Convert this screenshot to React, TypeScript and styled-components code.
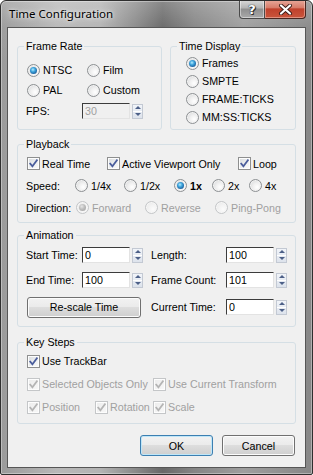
import React from "react";
import styled, { createGlobalStyle } from "styled-components";

const GlobalStyle = createGlobalStyle`
  html, body { margin: 0; padding: 0; background: #ffffff; }
  body { font-family: "Liberation Sans", Arial, sans-serif; }
  * { box-sizing: border-box; }
`;

const Window = styled.div`
  width: 313px;
  height: 475px;
  display: flex;
  flex-direction: column;
  border: 1px solid #2f2f2f;
  border-radius: 6px 6px 2px 2px;
  overflow: hidden;
  background:
    linear-gradient(180deg, rgba(255,255,255,0.22) 0px, rgba(255,255,255,0.04) 26px, rgba(0,0,0,0) 60px),
    linear-gradient(90deg, #9a9a9a 0%, #b8b8b8 18%, #b3b3b3 32%, #878787 44%, #686868 52%, #858585 62%, #9e9e9e 78%, #878787 100%);
  box-shadow: inset 0 0 0 1px rgba(255,255,255,0.35);
`;

const TitleBar = styled.div`
  height: 26px;
  flex: none;
  display: flex;
  align-items: flex-start;
`;

const TitleText = styled.div`
  flex: 1;
  padding-left: 8px;
  line-height: 26px;
  font-family: "Noto Sans", "Open Sans", sans-serif;
  font-size: 11.5px;
  color: #000;
  text-shadow: 0 0 6px rgba(255,255,255,0.9), 0 0 3px rgba(255,255,255,0.7);
`;

const CaptionButtons = styled.div`
  display: flex;
  margin: -1px 6px 0 0;
`;

const HelpButton = styled.div`
  width: 26px;
  height: 19px;
  display: flex;
  align-items: center;
  justify-content: center;
  border: 1px solid #4a4a4a;
  border-top: none;
  border-radius: 0 0 0 4px;
  background: linear-gradient(180deg, #dadada 0%, #b3b3b3 45%, #8f8f8f 50%, #a9a9a9 100%);
  box-shadow: inset 0 0 0 1px rgba(255,255,255,0.45);
  color: #fff;
  font-family: "DejaVu Sans", sans-serif;
  font-weight: bold;
  font-size: 13px;
  text-shadow: 0 0 1px #222, 0 0 1px #222, 1px 1px 0 #333;
`;

const CloseButton = styled.div`
  width: 41px;
  height: 19px;
  display: flex;
  align-items: center;
  justify-content: center;
  border: 1px solid #4a2620;
  border-top: none;
  border-left: none;
  border-radius: 0 0 4px 0;
  background: linear-gradient(180deg, #e8a99b 0%, #d77d6b 42%, #c0412c 50%, #c9553c 100%);
  box-shadow: inset 0 0 0 1px rgba(255,220,210,0.45);
`;

const Client = styled.div`
  flex: 1;
  margin: 0 6px 6px 6px;
  border: 1px solid #565656;
  background: #f0f0f0;
  padding: 18px 9px 0 9px;
  display: flex;
  flex-direction: column;
  font-size: 10.7px;
  color: #000;
`;

const TopRow = styled.div`
  display: flex;
  gap: 8px;
  align-items: stretch;
`;

const Group = styled.div<{ $mt?: number; $pb?: number; $w?: number; $grow?: boolean }>`
  display: flex;
  flex-direction: column;
  border: 1px solid #d5dfe5;
  border-radius: 3px;
  padding: 0 0 ${(p) => p.$pb ?? 0}px 8px;
  margin-top: ${(p) => p.$mt ?? 0}px;
  flex: ${(p) => (p.$grow ? "1 1 0" : "none")};
  ${(p) => (p.$w ? `width: ${p.$w}px;` : "")}
`;

const GroupTitle = styled.div`
  align-self: flex-start;
  margin: -7px 0 0 -2px;
  padding: 0 2px;
  line-height: 13px;
  background: #f0f0f0;
`;

const RadioGrid = styled.div<{ $cols: string; $rowH: number; $mt: number; $ml: number }>`
  display: grid;
  grid-template-columns: ${(p) => p.$cols};
  grid-auto-rows: ${(p) => p.$rowH}px;
  margin: ${(p) => p.$mt}px 0 0 ${(p) => p.$ml}px;
`;

const Row = styled.div<{ $h: number; $mt?: number }>`
  display: flex;
  align-items: center;
  height: ${(p) => p.$h}px;
  margin-top: ${(p) => p.$mt ?? 0}px;
`;

const Cell = styled.div<{ $w?: number }>`
  display: flex;
  align-items: center;
  ${(p) => (p.$w ? `width: ${p.$w}px; flex: none;` : "")}
`;

const Label = styled.span<{ $w: number }>`
  width: ${(p) => p.$w}px;
  flex: none;
  white-space: nowrap;
`;

const Item = styled.label<{ $w?: number; $ml?: number; $disabled?: boolean; $bold?: boolean; $gap: number }>`
  display: flex;
  align-items: center;
  gap: ${(p) => p.$gap}px;
  white-space: nowrap;
  ${(p) => (p.$w ? `width: ${p.$w}px; flex: none;` : "")}
  margin-left: ${(p) => p.$ml ?? 0}px;
  color: ${(p) => (p.$disabled ? "#a0a0a0" : "#000")};
  font-weight: ${(p) => (p.$bold ? "bold" : "normal")};
`;

const RadioCircle = styled.span<{ $checked?: boolean; $disabled?: boolean }>`
  width: 13px;
  height: 13px;
  flex: none;
  border-radius: 50%;
  display: flex;
  align-items: center;
  justify-content: center;
  border: 1px solid ${(p) => (p.$disabled ? "#c4c6c8" : "#8d9093")};
  background: ${(p) =>
    p.$disabled
      ? "radial-gradient(circle at 65% 65%, #fbfbfb 0%, #f2f2f2 45%, #e4e4e4 100%)"
      : "radial-gradient(circle at 65% 65%, #ffffff 0%, #f0f0f0 40%, #cfd1d3 100%)"};
  box-shadow: inset 0 0 0 1px ${(p) => (p.$disabled ? "#f6f6f6" : "#f2f2f2")};
  &::after {
    content: "";
    display: ${(p) => (p.$checked ? "block" : "none")};
    width: 7px;
    height: 7px;
    border-radius: 50%;
    background: ${(p) =>
      p.$disabled
        ? "radial-gradient(circle at 40% 35%, #e6e6e6 0%, #bdbdbd 45%, #9d9d9d 100%)"
        : "radial-gradient(circle at 42% 38%, #b8ecff 0%, #3fa6dd 35%, #1b5f9d 75%, #123f6b 100%)"};
  }
`;

const CheckBox = styled.span<{ $disabled?: boolean }>`
  width: 13px;
  height: 13px;
  flex: none;
  display: flex;
  align-items: center;
  justify-content: center;
  border: 1px solid ${(p) => (p.$disabled ? "#c4c6c8" : "#8e8f8f")};
  background: ${(p) =>
    p.$disabled
      ? "linear-gradient(135deg, #ececec 0%, #f8f8f8 100%)"
      : "linear-gradient(135deg, #d7dadd 0%, #eef0f1 55%, #fbfbfb 100%)"};
  box-shadow: inset 0 0 0 1px #fdfdfd;
`;

const TextField = styled.input<{ $disabled?: boolean }>`
  width: 48px;
  height: 16px;
  flex: none;
  margin: 0;
  padding: 0 2px;
  border: 1px solid;
  border-color: #3c3c3c #e3e3e3 #e3e3e3 #3c3c3c;
  background: ${(p) => (p.$disabled ? "#f0f0f0" : "#ffffff")};
  color: ${(p) => (p.$disabled ? "#a0a0a0" : "#000")};
  font-family: "Liberation Sans", Arial, sans-serif;
  font-size: 10.7px;
  line-height: 14px;
  outline: none;
`;

const Spinner = styled.span`
  width: 11px;
  height: 15px;
  flex: none;
  margin-left: 2px;
  display: flex;
  flex-direction: column;
  border: 1px solid #c3c9d3;
  background: linear-gradient(180deg, #f1f4f9 0%, #dde3ec 100%);
`;

const SpinHalf = styled.span<{ $down?: boolean }>`
  flex: 1;
  display: flex;
  align-items: center;
  justify-content: center;
  ${(p) => (p.$down ? "border-top: 1px solid #ffffff;" : "")}
  &::after {
    content: "";
    border-left: 3px solid transparent;
    border-right: 3px solid transparent;
    ${(p) => (p.$down ? "border-top: 3px solid #4d6088;" : "border-bottom: 3px solid #4d6088;")}
  }
`;

const PushButton = styled.button<{ $w: number; $default?: boolean; $ml?: number }>`
  width: ${(p) => p.$w}px;
  height: 21px;
  flex: none;
  margin: 0 0 0 ${(p) => p.$ml ?? 0}px;
  padding: 0;
  font-family: "Liberation Sans", Arial, sans-serif;
  font-size: 10.7px;
  color: #000;
  border: 1px solid ${(p) => (p.$default ? "#3c7fb1" : "#707070")};
  border-radius: 3px;
  background: linear-gradient(180deg, #f2f2f2 0%, #ebebeb 45%, #dddddd 50%, #cfcfcf 100%);
  box-shadow: inset 0 0 0 1px ${(p) => (p.$default ? "#bfe6f8" : "#fcfcfc")};
`;

const ButtonRow = styled.div`
  display: flex;
  justify-content: flex-end;
  gap: 9px;
  margin-top: 11px;
  padding-right: 1px;
`;

type RadioProps = {
  text: string;
  checked?: boolean;
  disabled?: boolean;
  bold?: boolean;
  w?: number;
  ml?: number;
};

const Radio = ({ text, checked, disabled, bold, w, ml }: RadioProps) => (
  <Item $gap={3} $w={w} $ml={ml} $disabled={disabled} $bold={bold}>
    <RadioCircle $checked={checked} $disabled={disabled} />
    <span>{text}</span>
  </Item>
);

type CheckProps = {
  text: string;
  checked?: boolean;
  disabled?: boolean;
  w?: number;
  ml?: number;
};

const Check = ({ text, checked, disabled, w, ml }: CheckProps) => (
  <Item $gap={2} $w={w} $ml={ml} $disabled={disabled}>
    <CheckBox $disabled={disabled}>
      {checked && (
        <svg width="9" height="9" viewBox="0 0 9 9">
          <path
            d="M1.2 4.6 L3.4 7.3 L7.9 1.2"
            fill="none"
            stroke={disabled ? "#b4b4b4" : "#4a5d9c"}
            strokeWidth="1.7"
            strokeLinecap="square"
          />
        </svg>
      )}
    </CheckBox>
    <span>{text}</span>
  </Item>
);

const Spin = () => (
  <Spinner>
    <SpinHalf />
    <SpinHalf $down />
  </Spinner>
);

type NumProps = { label: string; value: string; lw: number; disabled?: boolean };

const NumberField = ({ label, value, lw, disabled }: NumProps) => (
  <>
    <Label $w={lw}>{label}</Label>
    <TextField readOnly value={value} $disabled={disabled} disabled={disabled} />
    <Spin />
  </>
);

export default function App() {
  return (
    <>
      <GlobalStyle />
      <Window>
        <TitleBar>
          <TitleText>Time Configuration</TitleText>
          <CaptionButtons>
            <HelpButton>?</HelpButton>
            <CloseButton>
              <svg width="15" height="11" viewBox="0 0 15 11">
                <path d="M3 1.5 L12 9.5 M12 1.5 L3 9.5" stroke="#3d1f1a" strokeWidth="4" strokeLinecap="round" />
                <path d="M3 1.5 L12 9.5 M12 1.5 L3 9.5" stroke="#ffffff" strokeWidth="2.2" strokeLinecap="round" />
              </svg>
            </CloseButton>
          </CaptionButtons>
        </TitleBar>
        <Client>
          <TopRow>
            <Group $w={145} $pb={8}>
              <GroupTitle>Frame Rate</GroupTitle>
              <RadioGrid $cols="60px auto" $rowH={20} $mt={7} $ml={1}>
                <Radio text="NTSC" checked />
                <Radio text="Film" />
                <Radio text="PAL" />
                <Radio text="Custom" />
              </RadioGrid>
              <Row $h={20} $mt={1}>
                <NumberField label="FPS:" value="30" lw={56} disabled />
              </Row>
            </Group>
            <Group $grow>
              <GroupTitle>Time Display</GroupTitle>
              <RadioGrid $cols="auto" $rowH={18} $mt={1} $ml={7}>
                <Radio text="Frames" checked />
                <Radio text="SMPTE" />
                <Radio text="FRAME:TICKS" />
                <Radio text="MM:SS:TICKS" />
              </RadioGrid>
            </Group>
          </TopRow>

          <Group $mt={14} $pb={4}>
            <GroupTitle>Playback</GroupTitle>
            <Row $h={21} $mt={2}>
              <Check text="Real Time" checked w={80} ml={1} />
              <Check text="Active Viewport Only" checked w={131} />
              <Check text="Loop" checked />
            </Row>
            <Row $h={21} $mt={1}>
              <Label $w={49}>Speed:</Label>
              <Radio text="1/4x" w={49} />
              <Radio text="1/2x" w={50} />
              <Radio text="1x" checked bold w={38} />
              <Radio text="2x" w={37} />
              <Radio text="4x" />
            </Row>
            <Row $h={21} $mt={1}>
              <Label $w={50}>Direction:</Label>
              <Radio text="Forward" checked disabled w={69} />
              <Radio text="Reverse" disabled w={70} />
              <Radio text="Ping-Pong" disabled />
            </Row>
          </Group>

          <Group $mt={12} $pb={8}>
            <GroupTitle>Animation</GroupTitle>
            <Row $h={20} $mt={3}>
              <Cell $w={125}>
                <NumberField label="Start Time:" value="0" lw={56} />
              </Cell>
              <Cell>
                <NumberField label="Length:" value="100" lw={75} />
              </Cell>
            </Row>
            <Row $h={20} $mt={5}>
              <Cell $w={125}>
                <NumberField label="End Time:" value="100" lw={56} />
              </Cell>
              <Cell>
                <NumberField label="Frame Count:" value="101" lw={75} />
              </Cell>
            </Row>
            <Row $h={22} $mt={6}>
              <Cell $w={125}>
                <PushButton $w={114} $ml={1}>Re-scale Time</PushButton>
              </Cell>
              <Cell>
                <NumberField label="Current Time:" value="0" lw={75} />
              </Cell>
            </Row>
          </Group>

          <Group $mt={15} $pb={6}>
            <GroupTitle>Key Steps</GroupTitle>
            <Row $h={20} $mt={2}>
              <Check text="Use TrackBar" checked ml={1} />
            </Row>
            <Row $h={20} $mt={3}>
              <Check text="Selected Objects Only" checked disabled w={126} ml={1} />
              <Check text="Use Current Transform" checked disabled />
            </Row>
            <Row $h={20} $mt={3}>
              <Check text="Position" checked disabled w={68} ml={1} />
              <Check text="Rotation" checked disabled w={58} />
              <Check text="Scale" checked disabled />
            </Row>
          </Group>

          <ButtonRow>
            <PushButton $w={73} $default>OK</PushButton>
            <PushButton $w={73}>Cancel</PushButton>
          </ButtonRow>
        </Client>
      </Window>
    </>
  );
}
